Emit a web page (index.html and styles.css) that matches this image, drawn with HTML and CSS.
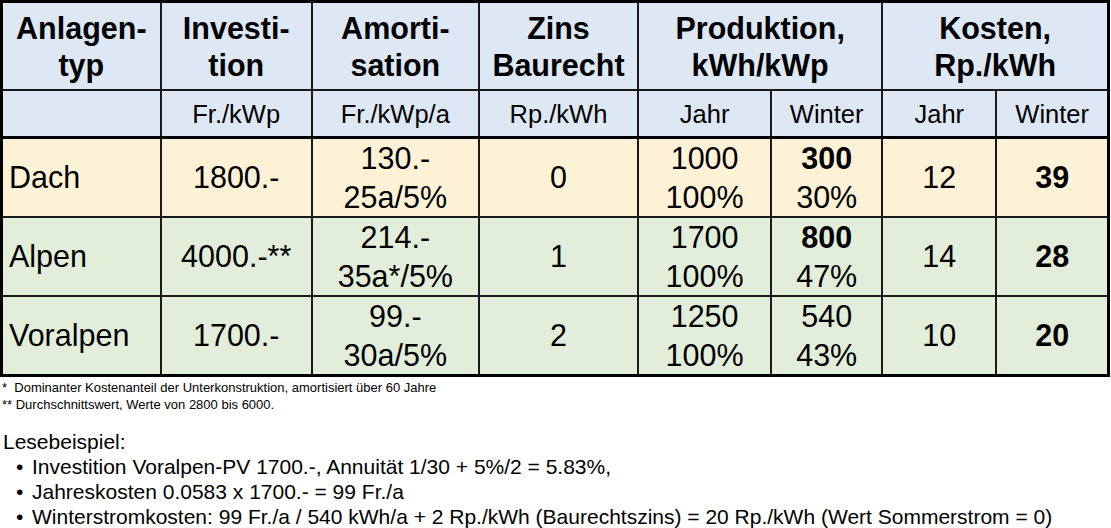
FILE: index.html
```html
<!DOCTYPE html>
<html lang="de">
<head>
<meta charset="utf-8">
<title>Kostenvergleich PV-Anlagen</title>
<link rel="stylesheet" href="styles.css">
</head>
<body>
<table class="grid">
  <colgroup>
    <col class="c1"><col class="c2"><col class="c3"><col class="c4"><col class="c5"><col class="c6"><col class="c7"><col class="c8">
  </colgroup>
  <thead>
    <tr class="head">
      <th>Anlagen-<br>typ</th>
      <th>Investi-<br>tion</th>
      <th>Amorti-<br>sation</th>
      <th>Zins<br>Baurecht</th>
      <th colspan="2">Produktion,<br>kWh/kWp</th>
      <th colspan="2">Kosten,<br>Rp./kWh</th>
    </tr>
    <tr class="unit">
      <td></td>
      <td>Fr./kWp</td>
      <td>Fr./kWp/a</td>
      <td>Rp./kWh</td>
      <td>Jahr</td>
      <td>Winter</td>
      <td>Jahr</td>
      <td>Winter</td>
    </tr>
  </thead>
  <tbody>
    <tr class="row roof">
      <td class="name">Dach</td>
      <td>1800.-</td>
      <td>130.-<br>25a/5%</td>
      <td>0</td>
      <td>1000<br>100%</td>
      <td><b>300</b><br>30%</td>
      <td>12</td>
      <td><b>39</b></td>
    </tr>
    <tr class="row green">
      <td class="name">Alpen</td>
      <td>4000.-**</td>
      <td>214.-<br>35a*/5%</td>
      <td>1</td>
      <td>1700<br>100%</td>
      <td><b>800</b><br>47%</td>
      <td>14</td>
      <td><b>28</b></td>
    </tr>
    <tr class="row green">
      <td class="name">Voralpen</td>
      <td>1700.-</td>
      <td>99.-<br>30a/5%</td>
      <td>2</td>
      <td>1250<br>100%</td>
      <td>540<br>43%</td>
      <td>10</td>
      <td><b>20</b></td>
    </tr>
  </tbody>
</table>

<div class="notes">
  <p>*&nbsp;&nbsp;Dominanter Kostenanteil der Unterkonstruktion, amortisiert über 60 Jahre</p>
  <p>** Durchschnittswert, Werte von 2800 bis 6000.</p>
</div>

<div class="reading">
  <p class="title">Lesebeispiel:</p>
  <ul>
    <li>Investition Voralpen-PV 1700.-, Annuität 1/30 + 5%/2 = 5.83%,</li>
    <li>Jahreskosten 0.0583 x 1700.- = 99 Fr./a</li>
    <li>Winterstromkosten: 99 Fr./a / 540 kWh/a + 2 Rp./kWh (Baurechtszins) = 20 Rp./kWh (Wert Sommerstrom = 0)</li>
  </ul>
</div>
</body>
</html>
```

FILE: styles.css
```css
html, body {
  margin: 0;
  padding: 0;
  background: #ffffff;
}

body {
  font-family: "Liberation Sans", Arial, sans-serif;
  color: #000000;
  width: 1111px;
}

.grid {
  border-collapse: collapse;
  table-layout: fixed;
  width: 1110px;
  border: 3px solid #000000;
}

.c1 { width: 159px; }
.c2 { width: 151px; }
.c3 { width: 167px; }
.c4 { width: 159px; }
.c5 { width: 133px; }
.c6 { width: 111px; }
.c7 { width: 114px; }
.c8 { width: 112px; }

.grid th,
.grid td {
  border: 2px solid #1a1a1a;
  padding: 0;
  text-align: center;
  vertical-align: middle;
}

.head th {
  background: #dde8f4;
  font-weight: bold;
  font-size: 30.5px;
  line-height: 37px;
  height: 84px;
  padding-top: 2px;
}

.unit td {
  background: #dde8f4;
  font-size: 25.5px;
  line-height: 30px;
  height: 45px;
  border-bottom: 3px solid #000000;
}

.row td {
  font-size: 30.5px;
  line-height: 38.5px;
  height: 77px;
}

.row td.name {
  text-align: left;
  padding-left: 6px;
}

.roof td { background: #fef2d6; }
.green td { background: #e2eeda; }

.notes {
  margin-top: 2px;
  font-size: 13px;
  line-height: 17px;
}

.notes p {
  margin: 0;
  padding-left: 2px;
}

.reading {
  margin-top: 16px;
  font-size: 21px;
  line-height: 25px;
}

.reading .title {
  margin: 0;
  padding-left: 3px;
}

.reading ul {
  margin: 0;
  padding: 0;
  list-style: none;
}

.reading li {
  position: relative;
  padding-left: 32px;
}

.reading li::before {
  content: "\2022";
  position: absolute;
  left: 16px;
  top: 0;
}
```
